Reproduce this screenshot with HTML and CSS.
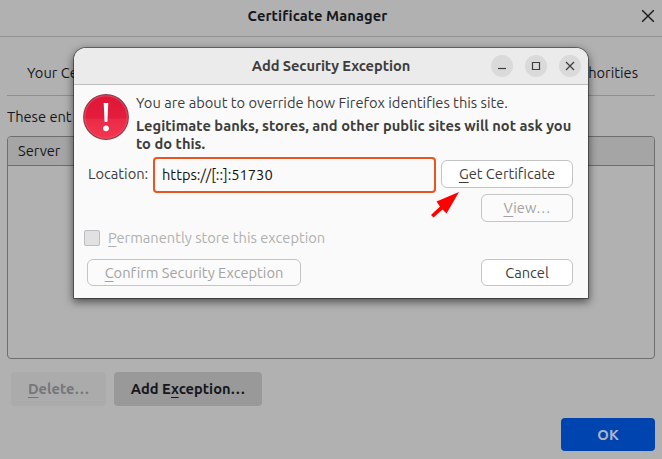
FILE: index.html
```html
<!DOCTYPE html>
<html lang="en">
<head>
<meta charset="utf-8">
<title>Certificate Manager</title>
<link rel="stylesheet" href="styles.css">
</head>
<body>
<main class="manager">
  <header class="manager-title">
    <h1>Certificate Manager</h1>
    <svg class="manager-close" width="14" height="14" viewBox="0 0 14 14"><path d="M1.2 1.2 12.8 12.8M12.8 1.2 1.2 12.8"/></svg>
  </header>
  <nav class="tabs"><span>Your Ce</span><span>horities</span></nav>
  <p class="intro">These ent</p>
  <section class="list"><div class="list-head">Server</div></section>
  <div class="actions">
    <button class="flat delete" disabled><span><u>D</u>elete…</span></button>
    <button class="flat add"><span>Add E<u>x</u>ception…</span></button>
  </div>
  <footer class="foot"><button class="flat ok">OK</button></footer>
</main>

<section class="dialog" role="dialog">
  <header class="dialog-title">
    <h2>Add Security Exception</h2>
    <div class="controls">
      <svg width="22" height="22" viewBox="0 0 22 22"><circle cx="11" cy="11" r="11"/><path d="M7 13.5h8"/></svg>
      <svg width="22" height="22" viewBox="0 0 22 22"><circle cx="11" cy="11" r="11"/><path d="M7.5 7.5h7v7h-7z"/></svg>
      <svg width="22" height="22" viewBox="0 0 22 22"><circle cx="11" cy="11" r="11"/><path d="M7 7l8 8M15 7l-8 8"/></svg>
    </div>
  </header>
  <div class="warning">
    <svg class="warning-icon" width="46" height="46" viewBox="0 0 46 46">
      <defs><linearGradient id="red" x2="0" y2="1"><stop offset="0" stop-color="#df1637"/><stop offset=".53" stop-color="#e31d3c"/><stop offset=".54" stop-color="#e92b48"/><stop offset="1" stop-color="#f4364f"/></linearGradient></defs>
      <circle cx="23" cy="23" r="22.3" fill="url(#red)" stroke="#8b3a4a" stroke-width="1.2"/>
      <circle cx="23" cy="23" r="21.2" fill="none" stroke="#f05a70" stroke-width=".7"/>
      <path d="M20.7 9h4.6l-.9 19h-2.8z" fill="#fff"/><circle cx="23" cy="34.3" r="2.9" fill="#fff"/>
    </svg>
    <div class="warning-text">
      <p>You are about to override how Firefox identifies this site.</p>
      <p class="strong">Legitimate banks, stores, and other public sites will not ask you<br>to do this.</p>
    </div>
  </div>
  <div class="location">
    <label>Location:</label>
    <div class="field">https://[::]:51730</div>
    <button class="btn get"><span><u>G</u>et Certificate</span></button>
  </div>
  <div class="view-row"><button class="btn short" disabled><span><u>V</u>iew…</span></button></div>
  <div class="store"><span class="check"></span><span><u>P</u>ermanently store this exception</span></div>
  <div class="dialog-actions">
    <button class="btn confirm" disabled><span><u>C</u>onfirm Security Exception</span></button>
    <button class="btn short">Cancel</button>
  </div>
</section>
<svg class="pointer" width="30" height="28" viewBox="0 0 30 28"><path d="M28 0 15.5 21.5 11.5 17.5 2.5 25.5 0 23 9 14.5 5.5 9.5z"/></svg>
</body>
</html>
```
FILE: styles.css
```css
* { box-sizing: border-box; }
body { margin: 0; width: 662px; height: 459px; overflow: hidden; position: relative; background: #b1b1b1; color: #16161b; font: 14.667px/18px Ubuntu, "Noto Sans", sans-serif; }
h1, h2, p { margin: 0; font-size: inherit; font-weight: 600; white-space: nowrap; }
h1 { letter-spacing: .1px; }
h2 { letter-spacing: -.08px; }
p { font-weight: 400; }
span, label { white-space: nowrap; }
button { font: inherit; color: inherit; padding: 0; border: 0; display: flex; align-items: center; justify-content: center; }
u { text-decoration-thickness: 1px; text-underline-offset: 3px; text-decoration-skip-ink: none; }

.manager { height: 459px; display: flex; flex-direction: column; }
.manager-title { height: 37px; border-bottom: 1px solid #919191; display: grid; grid-template-columns: 1fr auto 1fr; align-items: center; padding: 0 7px 4px 0; }
.manager-title h1 { grid-column: 2; padding-right: 20px; }
.manager-close { justify-self: end; fill: none; stroke: #16161b; stroke-width: 1.4; }
.tabs { height: 59px; margin: 0 7px; padding: 13px 17px 0 20px; border-bottom: 1px solid #8f8f8f; display: flex; align-items: center; justify-content: space-between; }
.intro { height: 40px; padding: 12px 7px 0; }
.list { height: 223px; margin: 0 7px; border: 1px solid #6e6e6e; border-radius: 4px; }
.list-head { height: 29px; padding: 5px 10px; background: #a5a5a5; border-bottom: 1px solid #6e6e6e; border-radius: 3px 3px 0 0; }
.actions { display: flex; gap: 8px; padding: 13px 11px 12px; }
.flat { height: 34px; border-radius: 4px; background: #999; font-weight: 600; }
.delete { width: 95px; background: #ababab; color: #767678; }
.add { width: 148px; }
.foot { display: flex; justify-content: flex-end; padding-right: 7px; }
.ok { width: 94px; height: 33px; background: #0044b0; color: #adb5c4; }

.dialog { position: absolute; left: 74px; top: 48px; width: 514px; height: 250px; background: #fafafa; border-radius: 12px 12px 0 0; color: #3d3d3d; box-shadow: 0 0 0 1px rgba(0,0,0,.38), 0 3px 9px 1px rgba(0,0,0,.55); display: flex; flex-direction: column; }
.dialog-title { height: 37px; background: #ebebeb; border-bottom: 1px solid #bfbfbf; border-radius: 12px 12px 0 0; display: grid; grid-template-columns: 1fr auto 1fr; align-items: center; padding: 0 7px; }
.dialog-title h2 { grid-column: 2; }
.controls { justify-self: end; display: flex; gap: 12px; }
.controls circle { fill: #dadada; }
.controls path { fill: none; stroke: #3d3d3d; stroke-width: 1.2; }
.warning { display: flex; gap: 7px; padding: 9px 9px 0; height: 72px; }
.warning-text .strong { font-weight: 700; margin-top: 5px; letter-spacing: .015px; }
.location { display: flex; height: 36px; align-items: center; padding-left: 14px; }
.location label { width: 65px; padding-bottom: 2px; }
.field { width: 283px; height: 36px; border: 2px solid #e95420; border-radius: 4px; padding: 7px; color: #111; }
.btn { height: 28px; background: #fff; border: 1px solid #c4c4c4; border-radius: 6px; }
.btn:disabled { color: #a3a3a3; background: #fbfbfb; }
.get { width: 132px; margin: 0 0 2px 5px; }
.short { width: 92px; }
.view-row { padding: 1px 15px 8px 0; display: flex; justify-content: flex-end; }
.store { display: flex; align-items: center; gap: 8px; height: 16px; padding-left: 10px; color: #b0b0b0; }
.check { width: 16px; height: 16px; border: 1px solid #bcbcc2; background: #e1e1e1; border-radius: 2px; }
.dialog-actions { display: flex; justify-content: space-between; padding: 13px 15px 0 13px; }
.dialog-actions .btn { height: 27px; }
.confirm { width: 214px; font-variant-ligatures: none; }
.pointer { position: absolute; left: 431px; top: 192px; fill: #f00; }
```
